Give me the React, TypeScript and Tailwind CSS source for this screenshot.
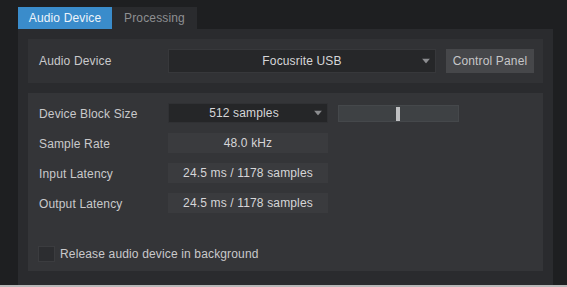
import React from "react";

const Arrow = () => (
  <svg width="8" height="5" viewBox="0 0 8 5" className="absolute right-[5px] top-1/2 -translate-y-1/2">
    <path d="M0 0 L8 0 L4 5 Z" fill="#8c8d90" />
  </svg>
);

export default function App() {
  const rows = [
    { label: "Sample Rate", value: "48.0 kHz" },
    { label: "Input Latency", value: "24.5 ms / 1178 samples" },
    { label: "Output Latency", value: "24.5 ms / 1178 samples" },
  ];
  return (
    <div
      className="w-[567px] h-[287px] bg-[#1e1f21] flex flex-col overflow-hidden text-[12px] tracking-[0.15px]"
      style={{ fontFamily: '"Liberation Sans", Arial, sans-serif' }}
    >
      <div className="flex-1 flex pl-[18px] pt-[7px]">
        <div className="w-[535px] flex flex-col">
          <div className="flex h-[22px]">
            <div className="w-[94px] bg-[#3a8ccb] text-[#eef4fa] flex items-center justify-center">Audio Device</div>
            <div className="w-[85px] bg-[#2a2b2e] text-[#8e8f92] flex items-center justify-center">Processing</div>
          </div>
          <div className="flex-1 bg-[#2a2b2e] px-[10px] pt-[10px] flex flex-col gap-[10px]">
            <div className="h-[44px] bg-[#313235] flex items-center pl-[11px]">
              <div className="w-[129px] text-[#c9c9cb]">Audio Device</div>
              <div className="relative w-[268px] h-[24px] bg-[#262729] border border-[#37383b] flex items-center justify-center text-[#d6d6d8]">
                Focusrite USB
                <Arrow />
              </div>
              <div className="ml-[10px] w-[88px] h-[24px] bg-[#46474a] flex items-center justify-center text-[#c6c6c8]">
                Control Panel
              </div>
            </div>
            <div className="h-[178px] bg-[#343538] pl-[11px] pt-[10px] flex flex-col">
              <div className="flex items-center h-[20px]">
                <div className="w-[129px] text-[#c9c9cb] pt-[1px]">Device Block Size</div>
                <div className="relative w-[160px] h-[20px] bg-[#252628] border border-[#303134] flex items-center justify-center text-[#d6d6d8] pr-[8px]">
                  512 samples
                  <Arrow />
                </div>
                <div className="ml-[10px] relative w-[121px] h-[17px] bg-[#3e4144] border border-[#45484b]">
                  <div className="absolute left-[57px] top-[1px] w-[4px] h-[14px] bg-[#bfc0c2]" />
                </div>
              </div>
              {rows.map((r) => (
                <div key={r.label} className="flex items-center h-[20px] mt-[10px]">
                  <div className="w-[129px] text-[#c9c9cb] pt-[1px]">{r.label}</div>
                  <div className="w-[160px] h-[20px] bg-[#3a3b3e] flex items-center justify-center text-[#d6d6d8]">
                    {r.value}
                  </div>
                </div>
              ))}
              <div className="flex items-center mt-[32px] -ml-[1px]">
                <div className="w-[17px] h-[16px] bg-[#2c2d30] border border-[#3b3c3f]" />
                <div className="ml-[5px] text-[#c9c9cb]">Release audio device in background</div>
              </div>
            </div>
          </div>
        </div>
      </div>
      <div className="h-[2px] bg-[#b8b8b8]" />
    </div>
  );
}
